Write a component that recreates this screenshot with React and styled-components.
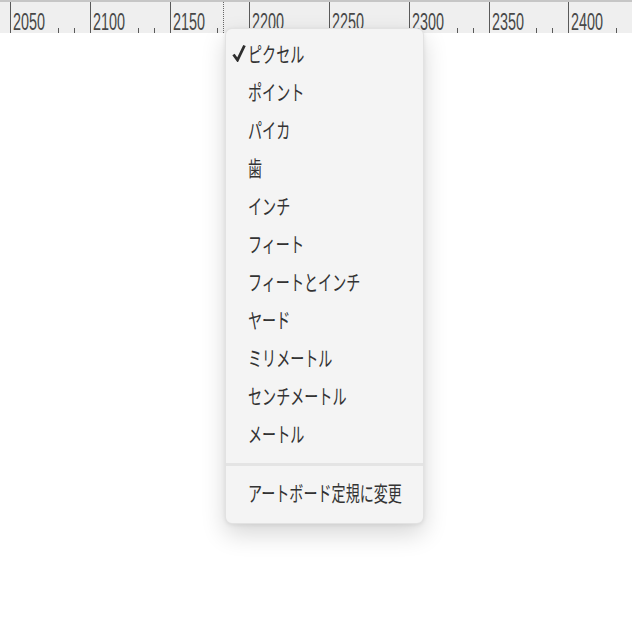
import React from 'react';
import styled, { createGlobalStyle } from 'styled-components';

const GlobalStyle = createGlobalStyle`
  html, body {
    margin: 0;
    padding: 0;
    background: #fff;
    font-family: "Noto Sans CJK JP", "Noto Sans", sans-serif;
  }
`;

const labels = ['2050', '2100', '2150', '2200', '2250', '2300', '2350', '2400'];

const units = [
  'ピクセル',
  'ポイント',
  'パイカ',
  '歯',
  'インチ',
  'フィート',
  'フィートとインチ',
  'ヤード',
  'ミリメートル',
  'センチメートル',
  'メートル',
];

const App = () => {
  return (
    <Page>
      <GlobalStyle />
      <TopEdge />
      <Ruler>
        {labels.map((label) => (
          <Segment key={label}>
            <Number>{label}</Number>
            <Ticks>
              <MinorTick />
              <MinorTick />
            </Ticks>
          </Segment>
        ))}
        <Cursor />
      </Ruler>
      <Menu>
        {units.map((unit, i) => (
          <Item key={unit}>
            <CheckSlot>
              {i === 0 && (
                <svg width="14" height="18" viewBox="0 0 14 18">
                  <path d="M1.5 10.5 L5.5 16 L12.5 1.5" fill="none" stroke="#2e2e2e" strokeWidth="2.8" />
                </svg>
              )}
            </CheckSlot>
            <Label>{unit}</Label>
          </Item>
        ))}
        <Divider />
        <Item>
          <CheckSlot />
          <Label>アートボード定規に変更</Label>
        </Item>
      </Menu>
    </Page>
  );
};

const Page = styled.div`
  position: relative;
  width: 632px;
  height: 632px;
  overflow: hidden;
  background: #fff;
`;

const TopEdge = styled.div`
  height: 2px;
  background: #c6c6c6;
`;

const Ruler = styled.div`
  position: relative;
  height: 31px;
  background: #efefef;
  display: flex;
  padding-left: 10px;
`;

const Segment = styled.div`
  flex: 0 0 79.75px;
  height: 100%;
  box-sizing: border-box;
  border-left: 1px solid #5a5a5a;
  display: flex;
  align-items: flex-end;
  justify-content: space-between;
  padding: 0 0 0 2px;
`;

const Number = styled.span`
  align-self: flex-start;
  margin-top: 8px;
  font-family: "Liberation Sans", Arial, sans-serif;
  font-size: 24px;
  line-height: 24px;
  color: #484848;
  transform: scaleX(0.6);
  transform-origin: left center;
  width: 36px;
  white-space: nowrap;
`;

const Ticks = styled.div`
  display: flex;
  gap: 15px;
  margin-right: 15px;
`;

const MinorTick = styled.div`
  width: 1px;
  height: 5px;
  background: #5a5a5a;
`;

const Cursor = styled.div`
  position: absolute;
  left: 223px;
  top: 0;
  height: 100%;
  border-left: 1px dotted #666;
`;

const Menu = styled.div`
  position: absolute;
  left: 225px;
  top: 28px;
  width: 199px;
  box-sizing: border-box;
  padding: 8px 0 9px;
  background: #f4f4f4;
  border: 1px solid rgba(0, 0, 0, 0.07);
  border-radius: 7px;
  box-shadow: 0 10px 24px rgba(0, 0, 0, 0.16), 0 1px 4px rgba(0, 0, 0, 0.08);
`;

const Item = styled.div`
  display: flex;
  align-items: center;
  height: 38px;
  box-sizing: border-box;
  padding: 0 0 6px 4px;
  color: #333;
`;

const CheckSlot = styled.div`
  flex: 0 0 18px;
  display: flex;
  align-items: center;
  justify-content: center;
`;

const Label = styled.span`
  display: inline-block;
  font-size: 21px;
  line-height: 30px;
  white-space: nowrap;
  transform: scaleX(0.67);
  transform-origin: left center;
`;

const Divider = styled.div`
  height: 3px;
  margin: 8px 0 10px;
  background: #e4e4e4;
`;

export default App;
